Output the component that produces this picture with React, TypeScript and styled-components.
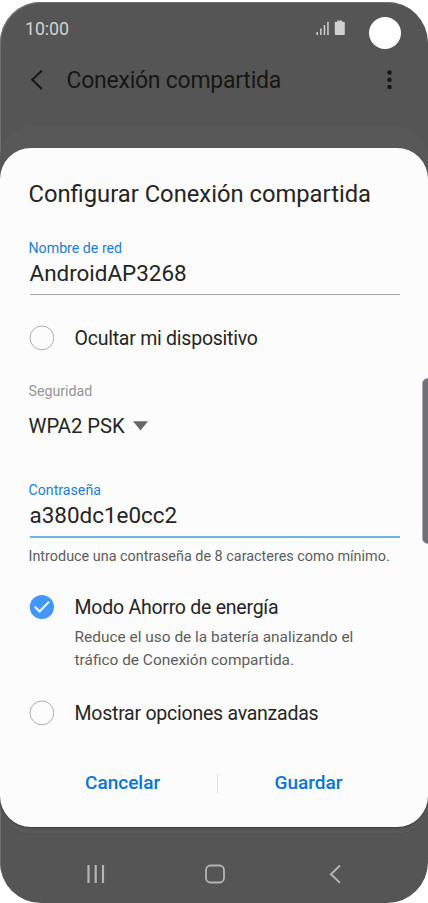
import React from 'react';
import styled, { createGlobalStyle } from 'styled-components';

const GlobalStyle = createGlobalStyle`
  * { box-sizing: border-box; }
  body { margin: 0; background: #fff; font-family: Roboto, sans-serif; }
`;

const Phone = styled.div`
  position: relative;
  width: 428px;
  height: 903px;
  padding-top: 2px;
  overflow: hidden;
`;

const Screen = styled.div`
  display: flex;
  flex-direction: column;
  height: 901px;
  padding-top: 1px;
  background: #555;
  border-radius: 41px;
  box-shadow: inset 1px 1px 0 #707070;
  overflow: hidden;
`;

const StatusBar = styled.div`
  display: flex;
  align-items: center;
  height: 52px;
  padding: 0 27.5px 0 25px;
`;

const Clock = styled.span`
  flex: 1;
  font-size: 17.8px;
  line-height: 24px;
  letter-spacing: -0.1px;
  color: #d2d2d2;
`;

const StatusIcons = styled.svg`
  display: block;
  margin: -2px 22.5px 0 0;
`;

const Camera = styled.div`
  width: 32px;
  height: 32px;
  margin-top: 8px;
  border-radius: 50%;
  background: #fff;
`;

const AppBar = styled.div`
  display: flex;
  align-items: center;
  height: 50px;
  padding: 0 34px 0 29px;
`;

const AppTitle = styled.h1`
  flex: 1;
  margin: 1px 0 0 18.5px;
  font-size: 23px;
  line-height: 31px;
  font-weight: 400;
  letter-spacing: -0.25px;
  color: #161616;
`;

const Backdrop = styled.div`
  height: 709px;
  margin-top: 21px;
  padding-top: 22px;
  border-radius: 32px;
  background: #585858;
  border-bottom: 1px solid #505050;
`;

const Dialog = styled.section`
  height: 679px;
  padding: 26px 28.5px 0 28.5px;
  border-radius: 31px;
  background: #fcfcfc;
  box-shadow: 0 1px 2px rgba(0, 0, 0, 0.35);
`;

const DialogTitle = styled.h2`
  margin: 0;
  font-size: 23.75px;
  line-height: 40px;
  height: 40px;
  font-weight: 400;
  color: #252525;
  white-space: nowrap;
`;

const Field = styled.div<{ $active?: boolean; $gap: number }>`
  height: ${(p) => (p.$active ? 57 : 56)}px;
  margin: ${(p) => p.$gap}px 0 0 1px;
  border-bottom: ${(p) => (p.$active ? '2px solid #6ab8dd' : '1px solid #a4a4a4')};
`;

const Label = styled.div<{ $muted?: boolean }>`
  margin-left: ${(p) => (p.$muted ? 0 : -1)}px;
  font-size: 14.2px;
  line-height: 18px;
  color: ${(p) => (p.$muted ? '#959595' : '#1a80d6')};
`;

const Value = styled.div`
  font-size: 22.45px;
  line-height: 33px;
  color: #252525;
`;

const Helper = styled.div`
  margin-top: 9px;
  font-size: 14.4px;
  line-height: 20px;
  color: #5c5c5c;
  white-space: nowrap;
`;

const Option = styled.div<{ $gap: number }>`
  display: flex;
  align-items: flex-start;
  gap: 21px;
  margin-top: ${(p) => p.$gap}px;
`;

const OptionText = styled.div`
  padding-top: 1px;
  font-size: 19.5px;
  line-height: 26px;
  letter-spacing: -0.24px;
  color: #252525;
  white-space: nowrap;
`;

const OptionNote = styled.div`
  margin-top: 5px;
  font-size: 15.45px;
  line-height: 23px;
  color: #5c5c5c;
`;

const Security = styled.div`
  margin-top: 30px;
`;

const Dropdown = styled.div`
  display: flex;
  align-items: center;
  gap: 8px;
  height: 30px;
  margin-top: 11px;
  font-size: 20.2px;
  color: #252525;
`;

const Actions = styled.div`
  display: flex;
  align-items: center;
  height: 30px;
  margin: 41px 0 0;
`;

const Action = styled.button<{ $indent: number; $width?: number }>`
  flex: ${(p) => (p.$width ? `0 0 ${p.$width}px` : '1')};
  padding: 0 0 0 ${(p) => p.$indent}px;
  border: 0;
  background: none;
  text-align: left;
  font: 500 19px/26px Roboto, sans-serif;
  color: #0576d9;
`;

const Divider = styled.div`
  width: 1px;
  height: 20px;
  background: #e2e2e2;
`;

const NavBar = styled.nav`
  display: flex;
  justify-content: space-between;
  align-items: center;
  height: 40px;
  margin-top: 19px;
  padding: 0 86px;
`;

const HomeIcon = styled.svg`
  margin-right: 4px;
`;

const EdgeHandle = styled.div`
  position: absolute;
  top: 378px;
  right: -5px;
  width: 11px;
  height: 166px;
  border: 1px solid #aaa9b0;
  border-radius: 6px;
  background: #706f7c;
`;

function Check({ checked = false }: { checked?: boolean }) {
  return (
    <svg width="25" height="26" viewBox="0 0 25 26">
      {checked ? (
        <>
          <circle cx="12.9" cy="13" r="12.1" fill="#4297ff" />
          <path d="M5.8 12.8 10.6 17.5 20 7.600" fill="none" stroke="#fff" strokeWidth="2.1" />
        </>
      ) : (
        <circle cx="12.9" cy="12.9" r="11.9" fill="none" stroke="#a5a5a5" strokeWidth="0.9" />
      )}
    </svg>
  );
}

export default function App() {
  return (
    <Phone>
      <GlobalStyle />
      <Screen>
        <StatusBar>
          <Clock>10:00</Clock>
          <StatusIcons width="30" height="16" viewBox="0 0 30 16" fill="#d0d0d0">
            <path d="M.5 12h1.5v3H.5zM4.1 8.6h1.5V15H4.1zM7.7 5h1.5v10H7.7zM11.2 1.8h1.5V15h-1.5z" />
            <path d="M21.2.5h4.8v1.2h1.8q1 0 1 1V14q0 1-1 1h-8q-1 0-1-1V2.7q0-1 1-1h1.4z" />
          </StatusIcons>
          <Camera />
        </StatusBar>
        <AppBar>
          <svg width="19" height="22" viewBox="0 0 19 22">
            <path d="M12.8 1.6 3.3 10.800l9.500 9.200" fill="none" stroke="#161616" strokeWidth="2" />
          </svg>
          <AppTitle>Conexión compartida</AppTitle>
          <svg width="9" height="22" viewBox="0 0 9 22" fill="#141414">
            <circle cx="4.5" cy="3.5" r="2.2" />
            <circle cx="4.5" cy="10.8" r="2.2" />
            <circle cx="4.5" cy="18" r="2.2" />
          </svg>
        </AppBar>
        <Backdrop>
          <Dialog>
            <DialogTitle>Configurar Conexión compartida</DialogTitle>
            <Field $gap={25}>
              <Label>Nombre de red</Label>
              <Value>AndroidAP3268</Value>
            </Field>
            <Option $gap={30}>
              <Check />
              <OptionText>Ocultar mi dispositivo</OptionText>
            </Option>
            <Security>
              <Label $muted>Seguridad</Label>
              <Dropdown>
                <span>WPA2 PSK</span>
                <svg width="15" height="10" viewBox="0 0 15 10">
                  <path d="M0 0.3h15L7.5 9.5z" fill="#686868" />
                </svg>
              </Dropdown>
            </Security>
            <Field $gap={40} $active>
              <Label>Contraseña</Label>
              <Value>a380dc1e0cc2</Value>
            </Field>
            <Helper>Introduce una contraseña de 8 caracteres como mínimo.</Helper>
            <Option $gap={27}>
              <Check checked />
              <div>
                <OptionText>Modo Ahorro de energía</OptionText>
                <OptionNote>
                  Reduce el uso de la batería analizando el
                  <br />
                  tráfico de Conexión compartida.
                </OptionNote>
              </div>
            </Option>
            <Option $gap={28}>
              <Check />
              <OptionText>Mostrar opciones avanzadas</OptionText>
            </Option>
            <Actions>
              <Action $indent={56.5} $width={188.5}>Cancelar</Action>
              <Divider />
              <Action $indent={56.5}>Guardar</Action>
            </Actions>
          </Dialog>
        </Backdrop>
        <NavBar>
          <svg width="20" height="22" viewBox="0 0 20 22">
            <path d="M2.5 2v18M9.7 2v18M17 2v18" stroke="#b5b5b5" strokeWidth="2.2" />
          </svg>
          <HomeIcon width="22" height="22" viewBox="0 0 22 22">
            <rect x="2" y="2.5" width="18" height="17" rx="4.5" fill="none" stroke="#b5b5b5" strokeWidth="1.8" />
          </HomeIcon>
          <svg width="14" height="22" viewBox="0 0 14 22">
            <path d="M12 2.5 3 11.2l9 8.700" fill="none" stroke="#b5b5b5" strokeWidth="1.9" />
          </svg>
        </NavBar>
      </Screen>
      <EdgeHandle />
    </Phone>
  );
}
